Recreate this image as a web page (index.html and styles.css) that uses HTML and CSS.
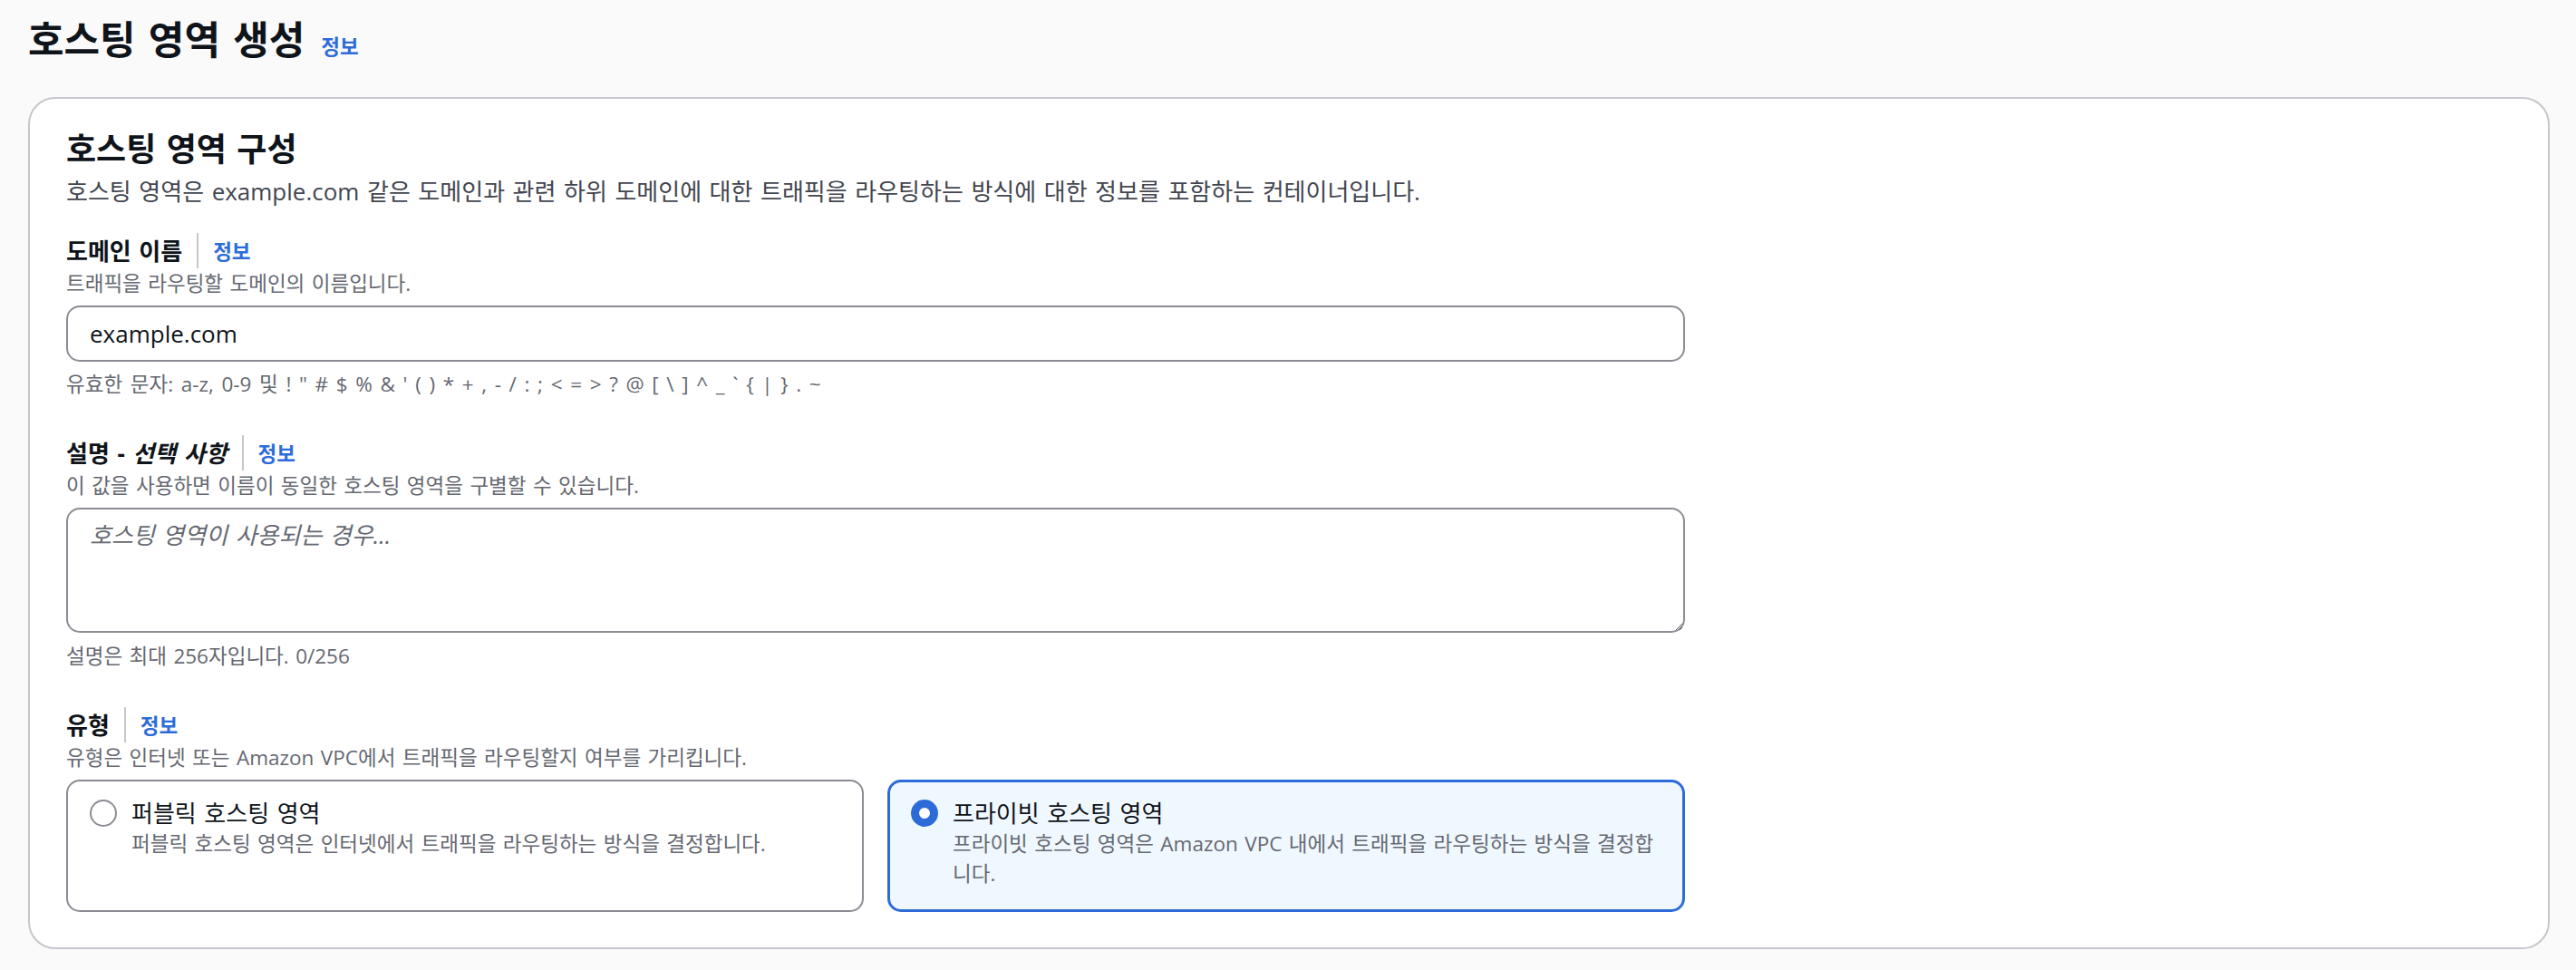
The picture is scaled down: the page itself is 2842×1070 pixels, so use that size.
FILE: index.html
```html
<!DOCTYPE html>
<html lang="ko">
<head>
<meta charset="utf-8">
<title>호스팅 영역 생성</title>
<link rel="stylesheet" href="styles.css">
</head>
<body>
<main class="page">
  <header class="page-header">
    <h1 class="page-title">호스팅 영역 생성</h1>
    <a class="info-link" href="#">정보</a>
  </header>

  <section class="container">
    <div class="container-header">
      <h2 class="container-title">호스팅 영역 구성</h2>
      <p class="container-desc">호스팅 영역은 example.com 같은 도메인과 관련 하위 도메인에 대한 트래픽을 라우팅하는 방식에 대한 정보를 포함하는 컨테이너입니다.</p>
    </div>

    <div class="field">
      <div class="label-row">
        <label class="field-label" for="domain">도메인 이름</label>
        <span class="divider"></span>
        <a class="info-link" href="#">정보</a>
      </div>
      <p class="field-desc">트래픽을 라우팅할 도메인의 이름입니다.</p>
      <input class="text-input" id="domain" type="text" value="example.com">
      <p class="field-constraint constraint-chars">유효한 문자: a-z, 0-9 및 ! " # $ % &amp; ' ( ) * + , - / : ; &lt; = &gt; ? @ [ \ ] ^ _ ` { | } . ~</p>
    </div>

    <div class="field field-gap">
      <div class="label-row">
        <label class="field-label" for="desc">설명 - <i class="optional">선택 사항</i></label>
        <span class="divider"></span>
        <a class="info-link" href="#">정보</a>
      </div>
      <p class="field-desc">이 값을 사용하면 이름이 동일한 호스팅 영역을 구별할 수 있습니다.</p>
      <textarea class="text-area" id="desc" placeholder="호스팅 영역이 사용되는 경우..."></textarea>
      <p class="field-constraint constraint-area">설명은 최대 256자입니다. 0/256</p>
    </div>

    <div class="field field-gap">
      <div class="label-row">
        <span class="field-label">유형</span>
        <span class="divider"></span>
        <a class="info-link" href="#">정보</a>
      </div>
      <p class="field-desc">유형은 인터넷 또는 Amazon VPC에서 트래픽을 라우팅할지 여부를 가리킵니다.</p>
      <div class="radio-group" role="radiogroup">
        <div class="radio-card" role="radio" aria-checked="false">
          <span class="radio-dot"></span>
          <div class="radio-text">
            <div class="radio-label">퍼블릭 호스팅 영역</div>
            <div class="radio-desc">퍼블릭 호스팅 영역은 인터넷에서 트래픽을 라우팅하는 방식을 결정합니다.</div>
          </div>
        </div>
        <div class="radio-card selected" role="radio" aria-checked="true">
          <span class="radio-dot"></span>
          <div class="radio-text">
            <div class="radio-label">프라이빗 호스팅 영역</div>
            <div class="radio-desc">프라이빗 호스팅 영역은 Amazon VPC 내에서 트래픽을 라우팅하는 방식을 결정합니다.</div>
          </div>
        </div>
      </div>
    </div>
  </section>
</main>
</body>
</html>
```

FILE: styles.css
```css
* { box-sizing: border-box; }

html, body {
  margin: 0;
  padding: 0;
}

body {
  background: #fafafa;
  color: #0f141a;
  font-family: "Open Sans", "Noto Sans CJK KR", sans-serif;
  font-size: 26px;
}

.page {
  padding: 18px 29px 0 31px;
}

.page-header {
  display: flex;
  align-items: baseline;
  gap: 18px;
  height: 52px;
}

.page-title {
  margin: 0;
  font-size: 43px;
  line-height: 52px;
  font-weight: 700;
  word-spacing: 3px;
}

.info-link {
  color: #2d6cd8;
  font-weight: 700;
  font-size: 22.5px;
  text-decoration: none;
}

.container {
  margin-top: 37px;
  background: #ffffff;
  border: 2px solid #c6c6cd;
  border-radius: 30px;
  padding: 35px 40px 39px 40px;
}

.container-title {
  margin: 0;
  font-size: 36px;
  line-height: 41px;
  font-weight: 700;
  word-spacing: 2px;
}

.container-desc {
  margin: 9px 0 0 0;
  line-height: 34px;
  color: #424650;
  word-spacing: 1.8px;
}

.field {
  margin-top: 29px;
  width: 1786px;
}

.field-gap {
  margin-top: 41px;
}

.label-row {
  display: flex;
  align-items: center;
  height: 39px;
}

.field-label {
  font-weight: 700;
  line-height: 34px;
  word-spacing: 1.8px;
}

.optional {
  font-style: italic;
}

.divider {
  width: 2px;
  height: 39px;
  background: #c6c6cd;
  margin: 0 16px 0 16px;
}

.field-desc,
.field-constraint {
  margin: 2px 0 0 0;
  font-size: 22.5px;
  line-height: 30px;
  color: #656871;
  word-spacing: 1.6px;
}

.field-constraint {
  margin-top: 10px;
}

.constraint-chars {
  word-spacing: 2.8px;
}

.constraint-area {
  margin-top: 11px;
}

.text-input,
.text-area {
  display: block;
  width: 1786px;
  margin: 9px 0 0 0;
  border: 2px solid #8c8c94;
  border-radius: 15px;
  background: #ffffff;
  font-family: "Open Sans", "Noto Sans CJK KR", sans-serif;
  font-size: 26px;
  color: #0f141a;
  outline: none;
  word-spacing: 1.8px;
}

.text-input {
  height: 62px;
  padding: 0 24px;
}

.text-area {
  height: 138px;
  padding: 11px 24px;
  line-height: 34px;
  resize: vertical;
}

.text-area::placeholder {
  color: #656871;
  font-style: italic;
  opacity: 1;
}

.radio-group {
  margin-top: 9px;
  display: grid;
  grid-template-columns: 1fr 1fr;
  gap: 26px;
}

.radio-card {
  display: flex;
  align-items: flex-start;
  gap: 16px;
  min-height: 146px;
  border: 2px solid #8c8c94;
  border-radius: 15px;
  background: #ffffff;
  padding: 18px 30px 22px 24px;
}

.radio-card.selected {
  border: 3px solid #2d6cd8;
  background: #f0f8ff;
  padding: 17px 29px 21px 23px;
}

.radio-dot {
  flex: none;
  width: 30px;
  height: 30px;
  margin-top: 2px;
  border-radius: 50%;
  border: 2px solid #8c8c94;
  background: #ffffff;
}

.selected .radio-dot {
  border: 9px solid #2d6cd8;
}

.radio-label {
  line-height: 34px;
  word-spacing: 1.8px;
}

.radio-desc {
  margin-top: 0;
  font-size: 22.5px;
  line-height: 33px;
  color: #656871;
  word-spacing: 1.6px;
}
```
